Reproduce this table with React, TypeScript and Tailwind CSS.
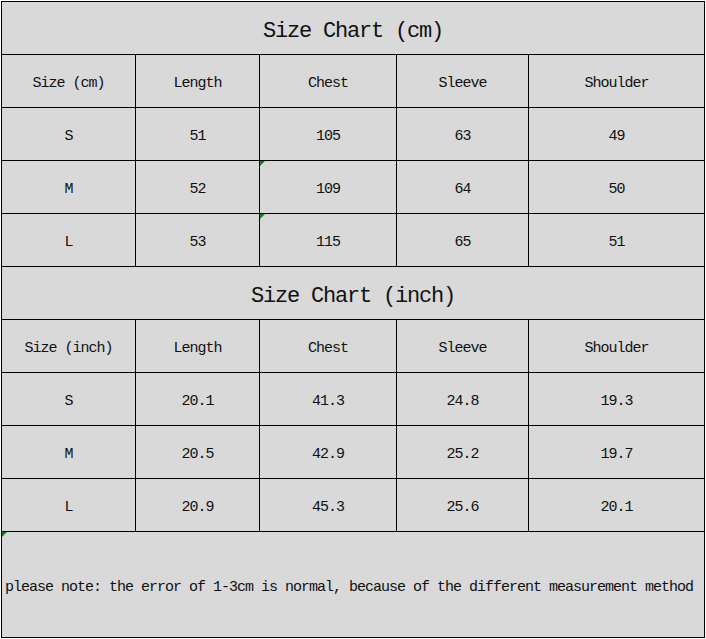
import React from 'react';

const cm = [
  ['S', '51', '105', '63', '49'],
  ['M', '52', '109', '64', '50'],
  ['L', '53', '115', '65', '51'],
];

const inch = [
  ['S', '20.1', '41.3', '24.8', '19.3'],
  ['M', '20.5', '42.9', '25.2', '19.7'],
  ['L', '20.9', '45.3', '25.6', '20.1'],
];

const Flag = () => (
  <span className="absolute left-0 top-0 h-0 w-0 border-l-[5px] border-b-[5px] border-l-[#1f7a1f] border-b-transparent" />
);

function Cell({ children, flag = false }: { children: React.ReactNode; flag?: boolean }) {
  return (
    <div className="relative flex h-[52px] items-center justify-center bg-[#d9d9d9] pt-[6px] text-[15px] tracking-[-1px]">
      {flag && <Flag />}
      {children}
    </div>
  );
}

function Section({ title, unit, rows }: { title: string; unit: string; rows: string[][] }) {
  return (
    <>
      <div className="col-span-5 flex h-[52px] items-center justify-center bg-[#d9d9d9] pt-[6px] text-[22px] tracking-[-1.2px]">
        {title}
      </div>
      {[unit, 'Length', 'Chest', 'Sleeve', 'Shoulder'].map(h => (
        <Cell key={h}>{h}</Cell>
      ))}
      {rows.map((r, i) =>
        r.map((v, j) => (
          <Cell key={i + '-' + j} flag={title.includes('cm') && j === 2 && i > 0}>
            {v}
          </Cell>
        ))
      )}
    </>
  );
}

export default function App() {
  return (
    <div className="h-[639px] w-[706px] bg-white pl-px pt-px font-['Liberation_Mono',monospace] text-[#111]">
      <div className="grid w-[704px] grid-cols-[133px_123px_136px_131px_175px] gap-px bg-black p-px">
        <Section title="Size Chart (cm)" unit="Size (cm)" rows={cm} />
        <Section title="Size Chart (inch)" unit="Size (inch)" rows={inch} />
        <div className="relative col-span-5 flex h-[105px] items-center bg-[#d9d9d9] pl-[3px] pt-[8px] text-[15px] tracking-[-1px]">
          <Flag />
          please note: the error of 1-3cm is normal, because of the different measurement method
        </div>
      </div>
    </div>
  );
}
